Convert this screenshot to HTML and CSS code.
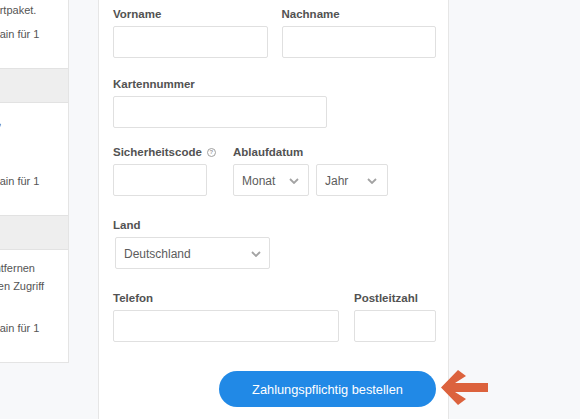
FILE: index.html
```html
<!DOCTYPE html>
<html lang="de">
<head>
    <meta charset="UTF-8">
    <meta name="viewport" content="width=device-width, initial-scale=1.0">
    <title>Kasse</title>
    <link rel="stylesheet" href="styles.css">
</head>
<body>
    <div class="page">
        <!-- Paketübersicht -->
        <div class="plan-card">
            <div class="plan">
                <div class="plan-head">Combo</div>
                <div class="plan-body">
                    <p class="plan-text">Viel Speicher<br>Enthalten im Startpaket.</p>
                    <p class="plan-price">Kostenlose Domain für 1<br>Jahr</p>
                </div>
            </div>
            <div class="plan">
                <div class="plan-head">Unlimited</div>
                <div class="plan-body">
                    <p class="plan-text">Bis zu 10 Seiten,<br>Eigene Domain<br>SSL-Zertifikat</p>
                    <p class="plan-price">Kostenlose Domain für 1<br>Jahr</p>
                </div>
            </div>
            <div class="plan">
                <div class="plan-head">VIP</div>
                <div class="plan-body">
                    <p class="plan-text">Werbebanner entfernen<br>Mit vollem mobilen Zugriff<br>und Statistiken</p>
                    <p class="plan-price">Kostenlose Domain für 1<br>Jahr</p>
                </div>
            </div>
        </div>

        <!-- Zahlungsformular -->
        <form class="checkout-form" onsubmit="return false">
            <div class="field-row">
                <div class="field grow">
                    <label class="field-label">Vorname</label>
                    <input class="text-input" type="text">
                </div>
                <div class="field grow">
                    <label class="field-label">Nachname</label>
                    <input class="text-input" type="text">
                </div>
            </div>

            <div class="field-row tight">
                <div class="field">
                    <label class="field-label">Kartennummer</label>
                    <input class="text-input card-number" type="text">
                </div>
            </div>

            <div class="field-row loose">
                <div class="field security">
                    <label class="field-label">Sicherheitscode <span class="help">?</span></label>
                    <input class="text-input cvc" type="text">
                </div>
                <div class="field">
                    <label class="field-label">Ablaufdatum</label>
                    <div class="select-group">
                        <div class="select month">
                            <span>Monat</span>
                            <svg class="chevron" width="10" height="6" viewBox="0 0 10 6"><path d="M1 1 L5 5 L9 1" fill="none" stroke="#a3a3a3" stroke-width="1.8"/></svg>
                        </div>
                        <div class="select year">
                            <span>Jahr</span>
                            <svg class="chevron" width="10" height="6" viewBox="0 0 10 6"><path d="M1 1 L5 5 L9 1" fill="none" stroke="#a3a3a3" stroke-width="1.8"/></svg>
                        </div>
                    </div>
                </div>
            </div>

            <div class="field-row loose">
                <div class="field">
                    <label class="field-label">Land</label>
                    <div class="select country">
                        <span>Deutschland</span>
                        <svg class="chevron" width="10" height="6" viewBox="0 0 10 6"><path d="M1 1 L5 5 L9 1" fill="none" stroke="#a3a3a3" stroke-width="1.8"/></svg>
                    </div>
                </div>
            </div>

            <div class="field-row last">
                <div class="field grow">
                    <label class="field-label">Telefon</label>
                    <input class="text-input" type="text">
                </div>
                <div class="field">
                    <label class="field-label">Postleitzahl</label>
                    <input class="text-input zip" type="text">
                </div>
            </div>

            <div class="submit-row">
                <button class="submit-button" type="submit">Zahlungspflichtig bestellen</button>
                <svg class="pointer-arrow" width="48" height="37" viewBox="0 0 48 37">
                    <polygon points="0,18.5 17,1 25,7 14,14 47,14 47,23 14,23 25,30 17,36" fill="#dc623d"/>
                </svg>
            </div>
        </form>
    </div>
</body>
</html>
```

FILE: styles.css
```css
body {
    margin: 0;
    background-color: #f7f8fa;
    font-family: "Liberation Sans", Arial, sans-serif;
    font-size: 11px;
    color: #555555;
    overflow: hidden;
}

.page {
    display: flex;
    align-items: flex-start;
    min-height: 100vh;
}

/* Paketübersicht links */
.plan-card {
    flex: none;
    width: 161px;
    margin-left: -94px;
    margin-top: -61px;
    background: #ffffff;
    border: 1px solid #e4e4e4;
    white-space: nowrap;
}

.plan-head {
    height: 33px;
    line-height: 33px;
    padding: 0 12px;
    background-color: #eeeeee;
    border-bottom: 1px solid #e2e2e2;
    font-weight: bold;
    color: #333333;
}

.plan + .plan .plan-head {
    border-top: 1px solid #e2e2e2;
}

.plan-body {
    padding: 9px 12px 7px;
}

.plan-text,
.plan-price {
    margin: 0;
    line-height: 18px;
}

.plan-price {
    margin-top: 6px;
}

/* Formular */
.checkout-form {
    flex: none;
    width: 323px;
    min-height: 100vh;
    margin-left: 29px;
    padding: 4px 12px 0 14px;
    background: #ffffff;
    border-left: 1px solid #e6e6e6;
    border-right: 1px solid #e6e6e6;
}

.field-row {
    display: flex;
    gap: 14px;
    margin-bottom: 16px;
}

.field-row.tight {
    margin-bottom: 14px;
}

.field-row.loose {
    margin-bottom: 19px;
}

.field-row.last {
    gap: 15px;
    margin-bottom: 0;
}

.field {
    display: flex;
    flex-direction: column;
}

.field.grow {
    flex: 1;
}

.field.security {
    width: 106px;
}

.field-label {
    display: flex;
    align-items: center;
    gap: 5px;
    height: 16px;
    margin-top: 2px;
    margin-bottom: 4px;
    font-size: 11.5px;
    font-weight: bold;
    color: #525252;
}

.help {
    display: inline-flex;
    justify-content: center;
    align-items: center;
    width: 7px;
    height: 7px;
    border: 1px solid #a0a0a0;
    border-radius: 50%;
    font-size: 6px;
    color: #a0a0a0;
}

.text-input {
    box-sizing: border-box;
    width: 100%;
    height: 32px;
    margin: 0;
    padding: 0 8px;
    border: 1px solid #e0e0e0;
    border-radius: 2px;
    background: #ffffff;
    font: inherit;
    font-size: 12px;
}

.text-input.card-number {
    width: 214px;
}

.text-input.cvc {
    width: 94px;
}

.text-input.zip {
    width: 82px;
}

.select-group {
    display: flex;
    gap: 7px;
}

.select {
    box-sizing: border-box;
    display: flex;
    justify-content: space-between;
    align-items: center;
    height: 32px;
    padding: 2px 9px 0 8px;
    border: 1px solid #e0e0e0;
    border-radius: 2px;
    font-size: 12px;
    color: #5c5c5c;
}

.select.month {
    width: 76px;
}

.select.year {
    width: 72px;
    padding-right: 10px;
}

.select.country {
    width: 155px;
    margin-left: 2px;
    padding-right: 8px;
}

.submit-row {
    position: relative;
    display: flex;
    justify-content: flex-end;
    padding-top: 29px;
}

.submit-button {
    width: 217px;
    height: 36px;
    border: none;
    border-radius: 18px;
    background-color: #2189e6;
    color: #ffffff;
    font: inherit;
    font-size: 12.8px;
    cursor: pointer;
}

.pointer-arrow {
    position: absolute;
    top: 27px;
    right: -53px;
}
```
